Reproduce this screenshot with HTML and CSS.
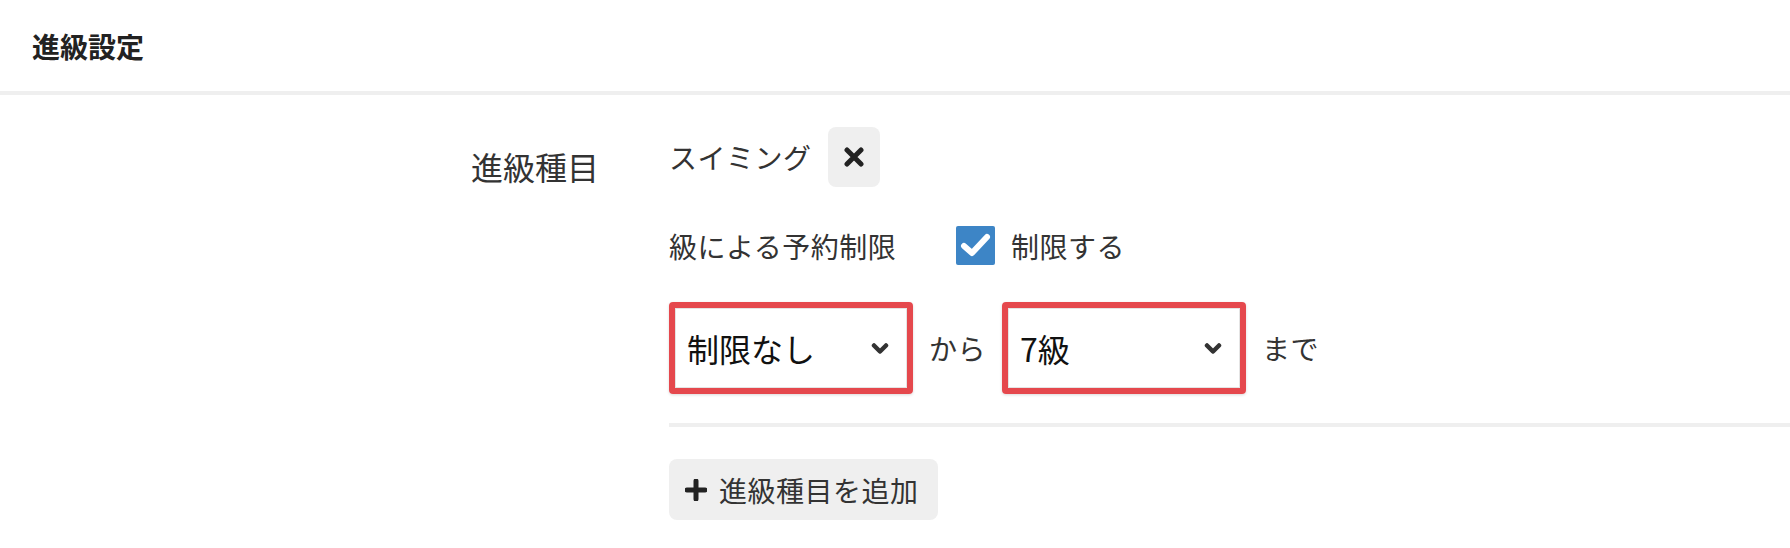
FILE: index.html
```html
<!DOCTYPE html>
<html lang="ja">
<head>
    <meta charset="UTF-8">
    <meta name="viewport" content="width=device-width, initial-scale=1.0">
    <title>進級設定</title>
    <link rel="stylesheet" href="styles.css">
</head>
<body>
    <div class="panel">
        <div class="panel-head">
            <h2>進級設定</h2>
        </div>
        <div class="panel-body">
            <div class="field">
                <div class="field-label">進級種目</div>
                <div class="field-main">
                    <div class="item-name">
                        <span>スイミング</span>
                        <button class="remove" type="button">
                            <svg width="20" height="20" viewBox="0 0 20 20"><path d="M3 3L17 17M17 3L3 17" stroke="#222" stroke-width="5" stroke-linecap="round"/></svg>
                        </button>
                    </div>
                    <div class="limit-row">
                        <span class="limit-label">級による予約制限</span>
                        <label class="check">
                            <span class="check-box">
                                <svg width="39" height="39" viewBox="0 0 39 39"><path d="M8 20L16 27L31 11" fill="none" stroke="#fff" stroke-width="6" stroke-linecap="round" stroke-linejoin="round"/></svg>
                            </span>
                            制限する
                        </label>
                    </div>
                    <div class="range-row">
                        <div class="select">
                            <span>制限なし</span>
                            <svg class="chevron" width="18" height="13" viewBox="0 0 18 13"><path d="M3 3.5L9 9.5L15 3.5" fill="none" stroke="#333" stroke-width="4.5" stroke-linecap="round" stroke-linejoin="round"/></svg>
                        </div>
                        <span>から</span>
                        <div class="select">
                            <span>7級</span>
                            <svg class="chevron" width="18" height="13" viewBox="0 0 18 13"><path d="M3 3.5L9 9.5L15 3.5" fill="none" stroke="#333" stroke-width="4.5" stroke-linecap="round" stroke-linejoin="round"/></svg>
                        </div>
                        <span>まで</span>
                    </div>
                    <div class="divider"></div>
                    <button class="add" type="button">
                        <svg width="22" height="22" viewBox="0 0 22 22"><path d="M11 2V20M2 11H20" stroke="#222" stroke-width="5" stroke-linecap="round"/></svg>
                        進級種目を追加
                    </button>
                </div>
            </div>
        </div>
    </div>
</body>
</html>
```

FILE: styles.css
```css
body {
    margin: 0;
    font-family: "Noto Sans CJK JP", "Noto Sans", sans-serif;
    color: #333;
    background: #fff;
}
.panel-head {
    height: 91px;
    display: flex;
    align-items: center;
    padding-left: 32px;
    border-bottom: 4px solid #efefef;
}
.panel-head h2 {
    margin: 0;
    font-size: 28px;
    font-weight: bold;
    color: #222;
}
.panel-body {
    padding-top: 32px;
}
.field {
    display: grid;
    grid-template-columns: 599px 1fr;
    column-gap: 70px;
}
.field-label {
    text-align: right;
    font-size: 32px;
    line-height: 48px;
    margin-top: 15px;
}
.field-main {
    font-size: 28px;
    letter-spacing: 0.5px;
}
.item-name {
    display: flex;
    align-items: center;
    height: 60px;
    gap: 16px;
}
.remove {
    width: 52px;
    height: 60px;
    border: none;
    border-radius: 8px;
    background: #efefef;
    display: flex;
    align-items: center;
    justify-content: center;
    padding: 0;
}
.limit-row {
    display: flex;
    align-items: center;
    height: 39px;
    margin-top: 39px;
}
.limit-label {
    width: 287px;
}
.check {
    display: flex;
    align-items: center;
    gap: 16px;
}
.check-box {
    width: 39px;
    height: 39px;
    background: #3d85c6;
    border-radius: 2px;
    display: flex;
}
.range-row {
    display: flex;
    align-items: center;
    gap: 16px;
    margin-top: 37px;
}
.select {
    width: 244px;
    height: 92px;
    box-sizing: border-box;
    border: 6px solid #e5484d;
    border-radius: 4px;
    box-shadow: inset 0 0 0 1px #e4e4e4, 0 1px 3px rgba(0, 0, 0, 0.15);
    display: flex;
    align-items: center;
    justify-content: space-between;
    padding: 0 18px 0 12px;
    font-size: 32px;
    letter-spacing: 0;
    color: #111;
}
.divider {
    height: 4px;
    background: #efefef;
    margin-top: 29px;
}
.add {
    margin-top: 32px;
    height: 61px;
    width: 269px;
    border: none;
    border-radius: 8px;
    background: #efefef;
    display: flex;
    align-items: center;
    gap: 12px;
    padding: 0 0 0 16px;
    font-family: inherit;
    font-size: 28px;
    letter-spacing: 0.5px;
    color: #333;
}
```
